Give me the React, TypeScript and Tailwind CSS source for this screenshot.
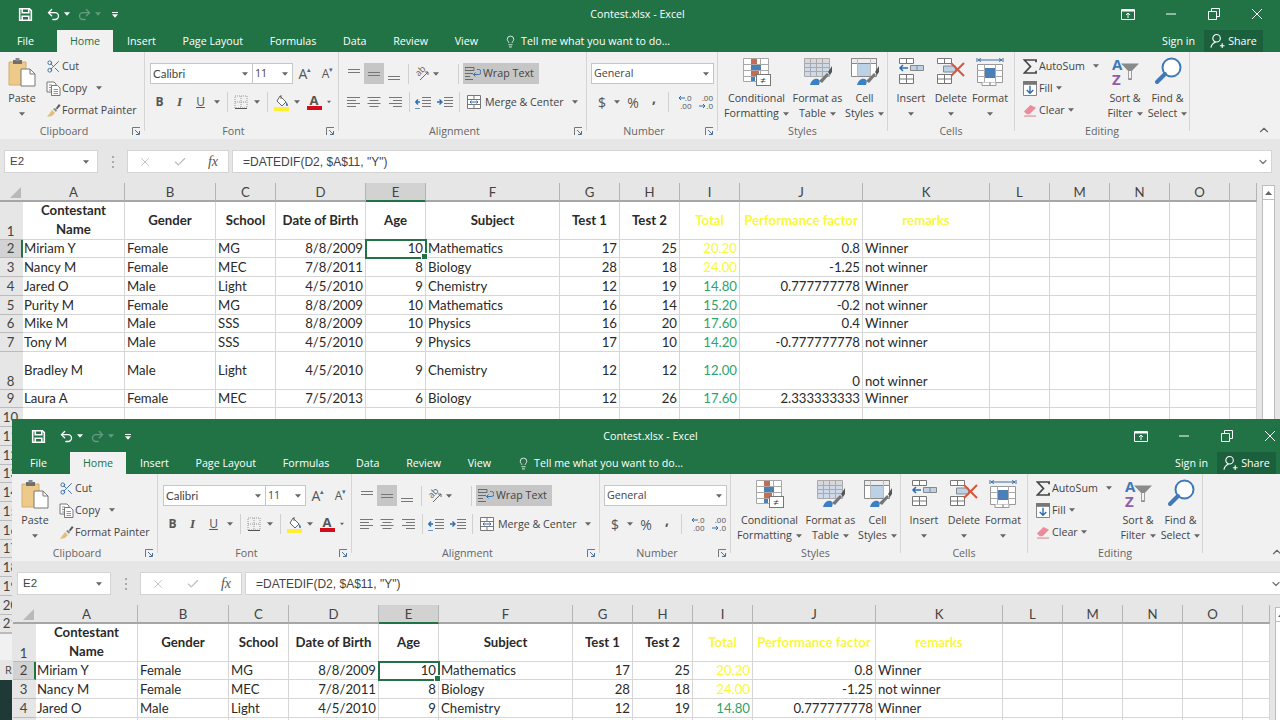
import React from "react";
import { Undo2, Redo2, Lightbulb, Scissors, ChevronDown, ChevronUp, X, Check } from "lucide-react";

const Caret = ({ c = "#666" }: { c?: string }) => (
  <svg width="6" height="4" viewBox="0 0 7 4"><path d="M0 0h7L3.5 4z" fill={c} /></svg>
);
const Slot = ({ className = "", children }: { className?: string; children?: React.ReactNode }) => (
  <div className={`flex items-center justify-center shrink-0 ${className}`}>{children}</div>
);
const Sep = () => <div className="w-px h-[20px] bg-[#d0d0d0]" />;

const Launcher = () => (
  <svg width="9" height="9" viewBox="0 0 9 9" fill="none" stroke="#777"><path d="M.5 8V.5H8" /><path d="M3 3l4 4M4 7.5h3.5V4" stroke="#4a6f9a" /></svg>
);

const Lines = ({ w, y = 0 }: { w: number[]; y?: number }) => (
  <svg width="14" height="14" viewBox="0 0 14 14" stroke="#777" strokeWidth="1">
    {w.map((v, i) => {
      const l = y === 1 ? (14 - v) / 2 : y === 2 ? 14 - v : 0;
      return <path key={i} d={`M${l} ${2.5 + i * 3}h${v}`} />;
    })}
  </svg>
);
const VLines = ({ top }: { top: number }) => (
  <svg width="14" height="14" viewBox="0 0 14 14" stroke="#777"><path d={`M1 ${top + 0.5}h12M1 ${top + 3.5}h12`} /></svg>
);
const Indent = ({ out }: { out?: boolean }) => (
  <svg width="16" height="13" viewBox="0 0 16 13" fill="none">
    <path d="M7 1.5h9M7 4.5h9M7 7.5h9M7 10.5h9" stroke="#777" />
    {out ? <path d="M5 6H1M3 3.500L.7 6 3 8.500" stroke="#2b6cb0" strokeWidth="1.4" /> : <path d="M0 6h4M2.500 3.500L5 6 2.500 8.500" stroke="#2b6cb0" strokeWidth="1.4" />}
    <path d="M0 12.500h5" stroke="#2b6cb0" opacity={out ? 0.7 : 0} />
  </svg>
);

const Save = () => (
  <svg width="15" height="15" viewBox="0 0 16 16" fill="none" stroke="#fff" strokeWidth="1.7">
    <path d="M1.800 1.800h10.400l2 2v10.400H1.800z" /><path d="M4.500 2v4.200h7V2M4.500 14v-4.200h7V14" />
  </svg>
);
const ShareIcon = () => (
  <svg width="15" height="16" viewBox="0 0 16 16" fill="none" stroke="#fff" strokeWidth="1.2">
    <circle cx="7" cy="5" r="4" /><path d="M1 15c.5-3 2.500-5 5-6M10.500 13h5M13 10.500v5" />
  </svg>
);

const Small = ({ icon, text, caret, capX }: { icon: React.ReactNode; text: string; caret?: boolean; capX?: string }) => (
  <div className="flex items-center h-[22px]">
    <Slot className="w-[18px]">{icon}</Slot>
    <span className="text-[#444]">{text}</span>
    {caret && <span className={`${capX ?? "ml-[4px]"} flex`}><Caret /></span>}
  </div>
);

const Big = ({ className, icon, l1, l2, caret }: { className: string; icon: React.ReactNode; l1: string; l2?: string; caret?: boolean }) => (
  <div className={`flex flex-col items-center shrink-0 ${className}`}>
    <div className="h-[39px] flex items-center justify-center">{icon}</div>
    <div className="h-[15px] leading-[15px] whitespace-nowrap text-[#444]">{l1}</div>
    <div className="h-[15px] flex items-center gap-[4px] whitespace-nowrap text-[#444]">{l2}{caret && <Caret />}</div>
  </div>
);

const Group = ({ className, label, launcher, children }: { className: string; label: string; launcher?: boolean; children: React.ReactNode }) => (
  <div className={`shrink-0 pt-[4px] ${className}`}>
    <div className="h-[79px] border-r border-[#d5d5d5]">
      <div className="h-[71px] -mt-[4px]">{children}</div>
      <div className="h-[16px] flex items-center">
        <span className="flex-1 text-center text-[#666]">{label}</span>
        {launcher && <Slot className="w-[16px]"><Launcher /></Slot>}
      </div>
    </div>
  </div>
);

const PasteIcon = () => (
  <svg width="28" height="30" viewBox="0 0 28 30">
    <path d="M1 5h17v23H1z" fill="#edc98a" stroke="#d3ad6c" />
    <path d="M5 3h9v4H5z" fill="#6f6f6f" /><path d="M7.500 1h4v3h-4z" fill="#888" />
    <path d="M13 12h9l5 5v12H13z" fill="#fff" stroke="#777" /><path d="M22 12v5h5" fill="none" stroke="#777" />
  </svg>
);
const CopyIcon = () => (
  <svg width="15" height="15" viewBox="0 0 15 15" fill="#fff" stroke="#777">
    <path d="M1 1h7l2 2v8H1z" /><path d="M5.500 4.500h6l2.500 2.500v7.500H5.500z" /><path d="M3 4h3M3 6.500h2M3 9h2M7.500 8.500h4.500M7.500 10.500h4.500M7.500 12.500h4.500" strokeWidth=".8" />
  </svg>
);
const Painter = () => (
  <svg width="15" height="15" viewBox="0 0 15 15">
    <path d="M1 14L6 7l3 3-3 3z" fill="#e2bd7c" /><path d="M7 6l2-1 2 2-1 2z" fill="#888" /><path d="M10 5l3-4 1.500 1.500L11 6.500z" fill="#555" />
  </svg>
);

const BorderIcon = () => (
  <svg width="14" height="14" viewBox="0 0 14 14" fill="none" stroke="#999" strokeDasharray="1 1"><path d="M1 1h12v12H1zM7 1v12M1 7h12" /><path d="M1 13.500h12" stroke="#555" strokeDasharray="0" /></svg>
);
const FillIcon = () => (
  <svg width="16" height="17" viewBox="0 0 16 17">
    <path d="M6 2l6 6-4 4-5-5z" fill="#fff" stroke="#666" /><path d="M12 8c1 1 2 2 2 3a1 1 0 01-2 0z" fill="#3b78b5" /><path d="M7 1l0 4" stroke="#666" />
    <rect x="0" y="13" width="15" height="4" fill="#ffee33" />
  </svg>
);
const ColorA = () => (
  <div className="flex flex-col items-center w-[15px] font-bold">
    <span className="text-[13px] leading-[12px] text-[#555]">A</span>
    <div className="w-[15px] h-[4px] bg-[#d40b18]" />
  </div>
);
const Orient = () => (
  <div className="relative w-[14px] h-[14px]">
    <span className="absolute left-[0px] top-[-2px] text-[9px] leading-[12px] text-[#666] -rotate-45">ab</span>
    <svg className="absolute left-0 top-0" width="14" height="14" viewBox="0 0 14 14" fill="none" stroke="#666"><path d="M5 13L13 5M13 8V5h-3" /></svg>
  </div>
);
const WrapIcon = () => (
  <svg width="16" height="15" viewBox="0 0 16 15" fill="none"><path d="M0 1.500h9v3H0zM0 7.500h8M0 10.500h5M0 13.500h8" stroke="#6a6a6a" /><path d="M12 3.500h1.500a2 2 0 010 5H8.500M10.500 6.500L8.500 8.500l2 2" stroke="#3471ad" /></svg>
);
const MergeIcon = () => (
  <svg width="14" height="14" viewBox="0 0 14 14" fill="#fff" stroke="#777"><path d="M.5.500h13v13H.5zM.5 4.500h13M.5 9.500h13M7 .500v4M7 9.500v4" /><path d="M3 7h8M4.500 5.500L3 7l1.500 1.500M9.500 5.500L11 7 9.500 8.500" stroke="#2b6cb0" fill="none" /></svg>
);
const IncDec = ({ a, b, up }: { a: string; b: string; up?: boolean }) => (
  <div className="flex flex-col items-end text-[8px] leading-[8px] text-[#555] w-[18px]">
    <div className="flex items-center">{up ? <svg width="7" height="6" viewBox="0 0 7 6" fill="none" stroke="#2b6cb0"><path d="M7 3H1M3 1L1 3l2 2" /></svg> : null}<span>{a}</span></div>
    <div className="flex items-center">{!up ? <svg width="7" height="6" viewBox="0 0 7 6" fill="none" stroke="#2b6cb0"><path d="M0 3h6M4 1l2 2-2 2" /></svg> : null}<span>{b}</span></div>
  </div>
);

const CondIcon = () => (
  <div className="relative w-[28px] h-[28px]">
    <svg width="26" height="24" viewBox="0 0 26 24" fill="#fff" stroke="#a8a8a8">
      <path d="M.5.500h25v23H.5zM8.500.500v23M17.500.500v23M.5 6.500h25M.5 12.500h25M.5 18.500h25" />
      <rect x="8" y="1" width="6" height="5" fill="#c86b50" stroke="none" /><rect x="8" y="7" width="10" height="5" fill="#4a7fb8" stroke="none" />
      <rect x="8" y="13" width="8" height="5" fill="#c86b50" stroke="none" /><rect x="8" y="19" width="4" height="4" fill="#4a7fb8" stroke="none" />
    </svg>
    <div className="absolute right-0 bottom-0 w-[15px] h-[12px] bg-white border border-[#777] flex items-center justify-center text-[10px] leading-[10px] text-[#333]">≠</div>
  </div>
);
const TableIcon = () => (
  <svg width="28" height="28" viewBox="0 0 28 28">
    <path d="M.5.500h25v18H.5z" fill="#fff" stroke="#aaa" />
    <path d="M1 1h24v4H1z" fill="#d8d8d8" /><path d="M1 5h24v13H1z" fill="#cfd9e8" />
    <path d="M6.500.500v18M12.500.500v18M18.500.500v18M.5 5.500h25M.5 9.500h25M.5 13.500h25" stroke="#aaa" fill="none" />
    <path d="M15 23l8-8 2 2-7 8z" fill="#777" /><path d="M24 14l4-6v6l-2 3z" fill="#555" /><path d="M6 27c1-4 4-7 8-6 2 1 2 3 1 6z" fill="#3b7fc4" />
  </svg>
);
const StylesIcon = () => (
  <svg width="28" height="28" viewBox="0 0 28 28">
    <path d="M.5.500h25v18H.5z" fill="#fff" stroke="#888" /><path d="M.5.500h25v5H.5z" fill="#ececec" stroke="#888" />
    <path d="M6 6h14v12H6z" fill="#bcd0e6" /><path d="M6.500 .5v18M19.500.500v18" stroke="#bbb" />
    <path d="M15 23l8-8 2 2-7 8z" fill="#777" /><path d="M24 14l4-6v6l-2 3z" fill="#555" /><path d="M6 27c1-4 4-7 8-6 2 1 2 3 1 6z" fill="#3b7fc4" />
  </svg>
);
const InsertIcon = () => (
  <svg width="26" height="27" viewBox="0 0 26 27" fill="#fff" stroke="#777">
    <path d="M1.500.500h14v5h-14zM8.500.500v5" /><path d="M1.500 16.500h14v9h-14zM8.500 16.500v9M1.500 21h14" />
    <path d="M12.500 7.500h13v5h-13zM19 7.500v5" fill="#bcd0e6" stroke="#888" /><path d="M10 10H2M5 7l-3 3 3 3" fill="none" stroke="#2b6cb0" strokeWidth="1.500" />
  </svg>
);
const DeleteIcon = () => (
  <svg width="29" height="27" viewBox="0 0 29 27" fill="#fff" stroke="#777">
    <path d="M.5.500h14v5H.5zM7.500.500v5" /><path d="M.5 16.500h14v9H.5zM7.500 16.500v9M.5 21h14" /><path d="M6.500 8h12v6h-12z" fill="#bcd0e6" stroke="#888" />
    <path d="M14 5l13 13M27 5L14 18" stroke="#d5583e" strokeWidth="2" fill="none" />
  </svg>
);
const FormatIcon = () => (
  <svg width="28" height="30" viewBox="0 0 28 30" fill="none">
    <path d="M1 1v4M27 1v4M2 3h24M5 1.500L2 3l3 1.500M23 1.500L26 3l-3 1.500" stroke="#3a6ea5" />
    <path d="M1.500 7.500h25v18H1.500z" fill="#fff" stroke="#999" /><path d="M8.500 7.500v18M19.500 7.500v18M1.500 13.500h25M1.500 19.500h25" stroke="#aaa" />
    <rect x="9" y="11" width="10" height="10" fill="#4a7fb8" /><path d="M6 25.500v3h8v-3M14 25.500v3h6v-3" fill="#fff" stroke="#999" />
  </svg>
);
const SigmaIcon = () => (
  <svg width="14" height="15" viewBox="0 0 15 16" fill="none" stroke="#444" strokeWidth="1.800"><path d="M14 3.500V1H1.500L8 8 1.500 15H14v-2.500" /></svg>
);
const FillDown = () => (
  <svg width="14" height="15" viewBox="0 0 15 16" fill="#fff" stroke="#777"><path d="M.5.500h14v15H.5z" /><path d="M.5.500h14v3H.5z" fill="#777" /><path d="M7.500 5v8M4 9.500l3.500 3.500L11 9.500" fill="none" stroke="#2b6cb0" strokeWidth="1.500" /></svg>
);
const Eraser = () => (
  <svg width="14" height="13" viewBox="0 0 15 14"><path d="M1 8l7-7 6 3-7 7H4z" fill="#eb8c9a" /><path d="M1 13h13" stroke="#c9798a" /></svg>
);
const SortIcon = () => (
  <div className="relative w-[30px] h-[30px] flex flex-col font-bold text-[15px] pl-[2px]">
    <span className="text-[#3f79b7] leading-[15px]">A</span><span className="text-[#8e5fa8] leading-[14px]">Z</span>
    <svg className="absolute right-0 top-[6px]" width="20" height="18" viewBox="0 0 22 20"><path d="M1 .500h20L13 9v10h-4V9z" fill="#8a8a8a" /><path d="M10 9h2v8h-2z" fill="#fff" /></svg>
  </div>
);
const FindIcon = () => (
  <svg width="28" height="29" viewBox="0 0 28 29" fill="none"><circle cx="17.500" cy="10.500" r="9" stroke="#3f79b7" strokeWidth="2" fill="#fff" /><path d="M11 17L3 25" stroke="#3f79b7" strokeWidth="4" strokeLinecap="round" /></svg>
);

const Ribbon = () => (
  <div className="flex h-[87px] bg-[#f1f1f1] text-[10.7px]">
    <Group className="w-[145px]" label="Clipboard" launcher>
      <div className="flex pl-[6px]">
        <Big className="w-[32px]" icon={<PasteIcon />} l1="Paste" caret />
        <div className="ml-[6px] pt-[3px] leading-[22px]">
          <Small icon={<Scissors size={15} color="#3a6ea5" strokeWidth={1.500} />} text="Cut" />
          <Small icon={<CopyIcon />} text="Copy" caret capX="ml-[9px]" />
          <Small icon={<Painter />} text="Format Painter" />
        </div>
      </div>
    </Group>
    <Group className="w-[194px]" label="Font" launcher>
      <div className="pl-[5px] pt-[11px]">
        <div className="flex h-[21px] items-center">
          <div className="w-[103px] h-[21px] bg-white border border-[#c6c6c6] flex items-center justify-between pl-[2px] pr-[4px] text-[#444] text-[11.500px] font-['Lato',sans-serif]">Calibri<Caret /></div>
          <div className="w-[41px] h-[21px] -ml-px bg-white border border-[#c6c6c6] flex items-center justify-between pl-[2px] pr-[4px] text-[#444]">11<Caret /></div>
          <Slot className="w-[24px] text-[14px] text-[#555]"><span>A</span><sup className="text-[#3a6ea5] text-[7px]">▴</sup></Slot>
          <Slot className="w-[21px] text-[12px] text-[#555]"><span>A</span><sup className="text-[#3a6ea5] text-[7px]">▾</sup></Slot>
        </div>
        <div className="flex h-[20px] mt-[8px] items-center text-[#555] text-[12px]">
          <Slot className="w-[19px] font-bold">B</Slot>
          <Slot className="w-[21px] italic font-bold font-['Liberation_Serif',serif] text-[13px]">I</Slot>
          <Slot className="w-[21px] underline">U</Slot>
          <Slot className="w-[12px]"><Caret /></Slot>
          <Slot className="w-[8px]"><Sep /></Slot>
          <Slot className="w-[20px]"><BorderIcon /></Slot>
          <Slot className="w-[12px]"><Caret /></Slot>
          <Slot className="w-[8px]"><Sep /></Slot>
          <Slot className="w-[22px]"><FillIcon /></Slot>
          <Slot className="w-[8px]"><Caret /></Slot>
          <Slot className="w-[26px]"><ColorA /></Slot>
          <Slot className="w-[4px]"><Caret /></Slot>
        </div>
      </div>
    </Group>
    <Group className="w-[248px]" label="Alignment" launcher>
      <div className="pl-[5px] pt-[11px]">
        <div className="flex h-[21px] items-center">
          <Slot className="w-[20px]"><VLines top={2} /></Slot>
          <Slot className="w-[20px] h-[21px] bg-[#c6c6c6]"><VLines top={5} /></Slot>
          <Slot className="w-[20px]"><VLines top={9} /></Slot>
          <Slot className="w-[8px]"><Sep /></Slot>
          <Slot className="w-[20px]"><Orient /></Slot>
          <Slot className="w-[8px]"><Caret /></Slot>
          <Slot className="w-[36px]"><Sep /></Slot>
          <div className="ml-[-13px] w-[76px] h-[21px] bg-[#c6c6c6] flex items-center pl-[2px] gap-[2px] text-[#444]"><WrapIcon /><span>Wrap Text</span></div>
        </div>
        <div className="flex h-[20px] mt-[8px] items-center">
          <Slot className="w-[20px]"><Lines w={[13, 9, 13, 9]} /></Slot>
          <Slot className="w-[20px]"><Lines w={[13, 9, 13, 9]} y={1} /></Slot>
          <Slot className="w-[21px]"><Lines w={[13, 9, 13, 9]} y={2} /></Slot>
          <Slot className="w-[8px]"><Sep /></Slot>
          <Slot className="w-[20px]"><Indent out /></Slot>
          <Slot className="w-[23px]"><Indent /></Slot>
          <Slot className="w-[6px]"><Sep /></Slot>
          <div className="flex items-center text-[#444] pl-[5px]"><MergeIcon /><span className="ml-[4px]">Merge &amp; Center</span><span className="ml-[8px] flex"><Caret /></span></div>
        </div>
      </div>
    </Group>
    <Group className="w-[131px]" label="Number" launcher>
      <div className="pl-[4px] pt-[11px]">
        <div className="w-[123px] h-[21px] bg-white border border-[#c6c6c6] flex items-center justify-between pl-[2px] pr-[4px] text-[#444]">General<Caret /></div>
        <div className="flex h-[20px] mt-[8px] items-center text-[#555] text-[14px]">
          <Slot className="w-[22px]">$</Slot>
          <Slot className="w-[8px]"><Caret /></Slot>
          <Slot className="w-[24px]">%</Slot>
          <Slot className="w-[18px] font-bold leading-[8px] pb-[8px]">,</Slot>
          <Slot className="w-[10px]"><Sep /></Slot>
          <Slot className="w-[19px]"><IncDec a=".0" b=".00" up /></Slot>
          <Slot className="w-[24px]"><IncDec a=".00" b=".0" /></Slot>
        </div>
      </div>
    </Group>
    <Group className="w-[170px]" label="Styles">
      <div className="flex pl-[5px]">
        <Big className="w-[67px]" icon={<CondIcon />} l1="Conditional" l2="Formatting" caret />
        <Big className="w-[55px]" icon={<TableIcon />} l1="Format as" l2="Table" caret />
        <Big className="w-[39px]" icon={<StylesIcon />} l1="Cell" l2="Styles" caret />
      </div>
    </Group>
    <Group className="w-[127px]" label="Cells">
      <div className="flex pl-[3px]">
        <Big className="w-[40px]" icon={<InsertIcon />} l1="Insert" caret />
        <Big className="w-[40px]" icon={<DeleteIcon />} l1="Delete" caret />
        <Big className="w-[38px]" icon={<FormatIcon />} l1="Format" caret />
      </div>
    </Group>
    <Group className="w-[175px]" label="Editing">
      <div className="flex pl-[6px]">
        <div className="w-[82px] pt-[3px] leading-[22px]">
          <Small icon={<SigmaIcon />} text="AutoSum" caret capX="ml-[8px]" />
          <Small icon={<FillDown />} text="Fill" caret capX="ml-[3px]" />
          <Small icon={<Eraser />} text="Clear" caret capX="ml-[3px]" />
        </div>
        <Big className="w-[44px]" icon={<SortIcon />} l1="Sort &" l2="Filter" caret />
        <Big className="w-[41px]" icon={<FindIcon />} l1="Find &" l2="Select" caret />
      </div>
    </Group>
    <div className="flex-1 flex items-end justify-end pr-[9px] pb-[2px]"><ChevronUp size={14} color="#666" /></div>
  </div>
);

const FormulaBar = () => (
  <div className="h-[44px] bg-[#e6e6e6] flex pt-[11px] pl-[4px] items-start text-[#444] text-[12px]">
    <div className="w-[94px] h-[23px] bg-white border border-[#d4d4d4] flex items-center justify-between pl-[5px] pr-[8px] font-['Liberation_Sans',sans-serif] text-[11.500px]">E2<Caret /></div>
    <div className="w-[29px] h-[23px] flex flex-col items-center justify-center gap-[3px]">
      <span className="w-[2px] h-[2px] bg-[#aaa]" /><span className="w-[2px] h-[2px] bg-[#aaa]" /><span className="w-[2px] h-[2px] bg-[#aaa]" />
    </div>
    <div className="w-[102px] h-[23px] bg-white border border-[#d4d4d4] flex items-center justify-between px-[10px]">
      <X size={14} color="#bbb" strokeWidth={1.500} /><Check size={14} color="#bbb" strokeWidth={2} />
      <span className="italic font-['Liberation_Serif',serif] text-[14px] text-[#555]">fx</span>
    </div>
    <div className="ml-[3px] w-[1040px] h-[23px] bg-white border border-[#d4d4d4] flex items-center justify-between pl-[10px] pr-[2px] font-['Liberation_Sans',sans-serif] text-[12px]">
      =DATEDIF(D2, $A$11, "Y")<ChevronDown size={12} color="#777" strokeWidth={2.500} />
    </div>
  </div>
);

const cols = ["w-[102px]", "w-[91px]", "w-[60px]", "w-[90px]", "w-[60px]", "w-[134px]", "w-[60px]", "w-[60px]", "w-[60px]", "w-[123px]", "w-[127px]", "w-[60px]", "w-[60px]", "w-[60px]", "w-[60px]", "w-[27px]"];
const heads = ["A", "B", "C", "D", "E", "F", "G", "H", "I", "J", "K", "L", "M", "N", "O", ""];
const right = [false, false, false, true, true, false, true, true, true, true, false];
const Y = "text-[#f8f83c]";
const G = "text-[#2fa36b]";

const data: { n: number; tall?: boolean; c: string[] }[] = [
  { n: 2, c: ["Miriam Y", "Female", "MG", "8/8/2009", "10", "Mathematics", "17", "25", "20.20", "0.8", "Winner"] },
  { n: 3, c: ["Nancy M", "Female", "MEC", "7/8/2011", "8", "Biology", "28", "18", "24.00", "-1.25", "not winner"] },
  { n: 4, c: ["Jared O", "Male", "Light", "4/5/2010", "9", "Chemistry", "12", "19", "14.80", "0.777777778", "Winner"] },
  { n: 5, c: ["Purity M", "Female", "MG", "8/8/2009", "10", "Mathematics", "16", "14", "15.20", "-0.2", "not winner"] },
  { n: 6, c: ["Mike M", "Male", "SSS", "8/8/2009", "10", "Physics", "16", "20", "17.60", "0.4", "Winner"] },
  { n: 7, c: ["Tony M", "Male", "SSS", "4/5/2010", "9", "Physics", "17", "10", "14.20", "-0.777777778", "not winner"] },
  { n: 8, tall: true, c: ["Bradley M", "Male", "Light", "4/5/2010", "9", "Chemistry", "12", "12", "12.00", "0", "not winner"] },
  { n: 9, c: ["Laura A", "Female", "MEC", "7/5/2013", "6", "Biology", "12", "26", "17.60", "2.333333333", "Winner"] },
];
const hdr: { t: string; c?: string }[] = [
  { t: "Contestant Name" }, { t: "Gender" }, { t: "School" }, { t: "Date of Birth" }, { t: "Age" }, { t: "Subject" }, { t: "Test 1" }, { t: "Test 2" },
  { t: "Total", c: Y }, { t: "Performance factor", c: Y }, { t: "remarks", c: Y },
];
const line = "border-r border-b border-[#d6d6d6]";

const Sheet = () => (
  <div className="flex bg-[#e6e6e6] font-['Lato',sans-serif] text-[13.200px] leading-[16px] text-[#2a2a2a]">
    <div className="w-[1258px] shrink-0">
      <div className="flex h-[19px]">
        <div className="w-[23px] flex items-end justify-end p-[2px] border-b-2 border-[#a6a6a6]"><svg width="11" height="11" viewBox="0 0 11 11"><path d="M11 0v11H0z" fill="#b9b9b9" /></svg></div>
        {heads.map((h, i) => (
          <div key={i} className={`${cols[i]} flex items-center justify-center border-b-2 text-[#444] ${i === 4 ? "bg-[#d2d2d2] border-b-[#217346]" : "border-b-[#a6a6a6]"} border-r border-r-[#b4b4b4]`}>{h}</div>
        ))}
      </div>
      <div className="flex h-[37.5px]">
        <div className="w-[23px] pr-[2px] flex items-end justify-center text-[#444] border-b border-[#bbb]">1</div>
        {cols.map((w, i) => (
          <div key={i} className={`${w} ${line} flex items-center justify-center text-center font-bold leading-[19px] px-[2px] bg-white ${hdr[i]?.c ?? ""}`}>
            {i === 0 ? <span>Contestant<br />Name</span> : hdr[i]?.t}
          </div>
        ))}
      </div>
      {data.map((r) => (
        <div key={r.n} className={`flex ${r.tall ? "h-[37.5px]" : "h-[18.75px]"}`}>
          <div className={`w-[23px] flex justify-center text-[#444] border-b border-[#bbb] ${r.tall ? "items-end" : "items-center"} ${r.n === 2 ? "bg-[#d2d2d2] border-r-2 border-r-[#217346]" : "pr-[2px]"}`}>{r.n}</div>
          {cols.map((w, i) => {
            const v = r.c[i] ?? "";
            const color = i === 8 ? (r.n <= 3 ? Y : G) : "";
            const sel = r.n === 2 && i === 4;
            return (
              <div key={i} className={`${w} ${line} bg-white flex ${i === 0 ? "pl-[1px] pr-[2px]" : "px-[2px]"} whitespace-nowrap relative ${right[i] ? "justify-end" : "justify-start"} ${r.tall && i >= 9 ? "items-end" : "items-center"} ${color} ${sel ? "outline-2 -outline-offset-1 outline-[#217346] z-10" : ""}`}>
                {v}
                {sel && <span className="absolute right-[-3px] bottom-[-3px] w-[5px] h-[5px] bg-[#217346] border border-white box-content" />}
              </div>
            );
          })}
        </div>
      ))}
      {[10, 11, 12, 13, 14, 15, 16, 17, 18, 19, 20, 21].map((n) => (
        <div key={n} className="flex h-[18.75px]">
          <div className="w-[23px] pr-[2px] flex items-center justify-center text-[#444] border-b border-[#bbb]">{n}</div>
          {cols.map((w, i) => <div key={i} className={`${w} ${line} bg-white`} />)}
        </div>
      ))}
    </div>
    <div className="ml-[4px] mt-[2px] w-[13px] bg-white border border-[#bdbdbd] self-stretch">
      <div className="h-[14px] flex items-center justify-center border-b border-[#bdbdbd]"><svg width="7" height="4" viewBox="0 0 7 4"><path d="M0 4h7L3.500 0z" fill="#666" /></svg></div>
    </div>
  </div>
);

const Window = () => (
  <div className="w-[1280px] font-['Open_Sans',sans-serif]">
    <div className="h-[52px] bg-[#217346] text-white">
      <div className="h-[28px] flex items-center">
        <div className="flex-1 flex items-center pl-[18px]">
          <Save />
          <Undo2 className="ml-[13px]" size={15} strokeWidth={2.200} />
          <span className="ml-[3px] flex"><Caret c="#fff" /></span>
          <Redo2 className="ml-[7px] opacity-30" size={15} strokeWidth={2.200} />
          <span className="ml-[3px] flex opacity-30"><Caret c="#fff" /></span>
          <div className="ml-[11px] flex flex-col gap-[1px] items-center mt-[2px]"><span className="w-[6px] h-px bg-white" /><Caret c="#fff" /></div>
        </div>
        <div className="text-[10.700px] mr-[21px]">Contest.xlsx - Excel</div>
        <div className="flex-1 flex items-center justify-end pr-[2px]">
          <Slot className="w-[43px]"><svg width="14" height="11" viewBox="0 0 14 11" fill="none" stroke="#fff"><path d="M.5.500h13v10H.5z" /><path d="M1 1h12v1.500H1z" fill="#fff" stroke="none" /><path d="M7 9V4M5 6l2-2 2 2" /></svg></Slot>
          <Slot className="w-[43px]"><svg width="14" height="2" viewBox="0 0 14 2"><path d="M2 1h10" stroke="#fff" /></svg></Slot>
          <Slot className="w-[43px]"><svg width="12" height="12" viewBox="0 0 12 12" fill="none" stroke="#fff"><path d="M.5 3.500h8v8h-8zM3.500 3V.5h8v8H9" /></svg></Slot>
          <Slot className="w-[43px]"><svg width="12" height="12" viewBox="0 0 12 12" stroke="#fff"><path d="M1 1l10 10M11 1L1 11" /></svg></Slot>
        </div>
      </div>
      <div className="h-[24px] flex items-end text-[10.700px]">
        <div className="w-[57px] h-[24px] flex items-center pl-[17px] pt-[2px]">File</div>
        <div className="w-[56px] h-[22px] bg-[#f1f1f1] text-[#217346] flex items-center justify-center">Home</div>
        <div className="h-[24px] pt-[2px] flex items-center ml-[14px] gap-[26.7px]">
          <span>Insert</span><span>Page Layout</span><span>Formulas</span><span>Data</span><span>Review</span><span>View</span>
        </div>
        <div className="h-[24px] pt-[2px] flex items-center ml-[26px] gap-[4px]"><Lightbulb size={13} strokeWidth={1.500} /><span>Tell me what you want to do...</span></div>
        <div className="flex-1" />
        <div className="h-[24px] pt-[2px] flex items-center mr-[9px]">Sign in</div>
        <div className="w-[59px] h-[22px] mr-[17px] bg-[#1b5f3c] flex items-center justify-center gap-[3px]"><ShareIcon /><span>Share</span></div>
      </div>
    </div>
    <Ribbon />
    <FormulaBar />
    <Sheet />
  </div>
);

export default function App() {
  return (
    <div className="relative w-[1280px] h-[720px] overflow-hidden bg-[#1f3a36]">
      <Window />
      <div className="w-[1280px] h-[27px] bg-[#f1f1f1] border-t border-[#bbb]" />
      <div className="w-[1280px] h-[20px] bg-[#e6e6e6] pl-[5px] text-[11px] leading-[20px] text-[#444] font-['Open_Sans',sans-serif]">Ready</div>
      <div className="absolute left-[12px] top-[419px] pl-px pt-[3px] bg-[linear-gradient(#217346_55px,#f1f1f1_55px,#f1f1f1_142px,#e6e6e6_142px)] w-[1281px]">
        <Window />
      </div>
    </div>
  );
}
